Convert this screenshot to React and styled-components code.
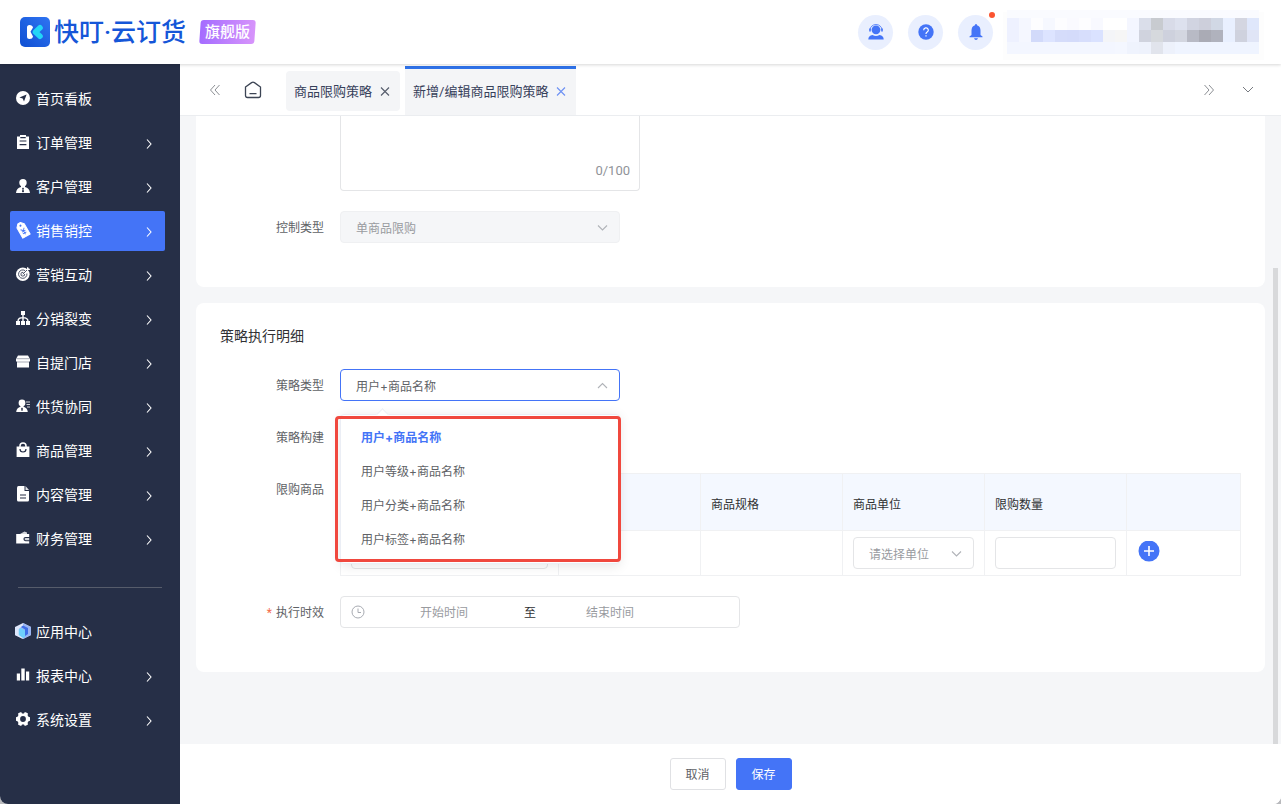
import React, { useState } from "react";
import styled, { createGlobalStyle, css } from "styled-components";

const GlobalStyle = createGlobalStyle`
	* {
		box-sizing: border-box;
	}
	body {
		margin: 0;
		background: #b9babd;
		font-family: Roboto, "Noto Sans CJK SC", sans-serif;
		font-size: 12px;
		color: #606266;
	}
	button, input, select, textarea {
		font-family: inherit;
		font-size: inherit;
		color: inherit;
		margin: 0;
	}
	svg {
		display: block;
	}
`;

const StyledPage = styled.div`
	display: flex;
	flex-direction: column;
	height: 100vh;
	overflow: hidden;
	border-radius: 0 0 8px 8px;
	background: white;
`;

// header

const StyledHeader = styled.header`
	position: relative;
	z-index: 2;
	display: flex;
	align-items: center;
	flex: none;
	height: 64px;
	padding: 0 17px 0 20px;
	background: white;
	box-shadow: 0 1px 3px rgba(0, 0, 0, 0.16);
`;

const StyledBrand = styled.span`
	margin-left: 4px;
	padding-top: 2px;
	font-size: 25px;
	line-height: 32px;
	font-weight: 500;
	white-space: nowrap;
	color: #1556d8;
`;

const StyledEdition = styled.span`
	position: relative;
	z-index: 0;
	margin-left: 14px;
	padding: 0 5px;
	font-size: 15px;
	line-height: 24px;
	font-weight: 500;
	white-space: nowrap;
	color: white;

	&::before {
		content: "";
		position: absolute;
		z-index: -1;
		inset: 0;
		border-radius: 3px;
		transform: skewX(-4deg);
		background: linear-gradient(90deg, #a46cff, #d794fb);
	}
`;

const StyledTools = styled.div`
	display: flex;
	align-items: center;
	gap: 15px;
	margin-left: auto;
`;

const StyledTool = styled.button`
	position: relative;
	display: flex;
	align-items: center;
	justify-content: center;
	width: 35px;
	height: 35px;
	padding: 0;
	border: none;
	border-radius: 50%;
	background: #e9effe;
	color: #4474f7;
	cursor: pointer;
`;

const StyledDot = styled.span`
	position: absolute;
	top: -3px;
	right: -2px;
	width: 6px;
	height: 6px;
	border-radius: 50%;
	background: #fb5430;
`;

const StyledAccount = styled.div`
	margin-left: 10px;
	padding-top: 6px;
`;

const StyledBody = styled.div`
	display: flex;
	flex: 1;
	min-height: 0;
`;

// side menu

const StyledMenu = styled.nav`
	display: flex;
	flex-direction: column;
	flex: none;
	gap: 4px;
	width: 180px;
	padding: 15px 15px 0 10px;
	background: #262f47;
`;

const StyledMenuItem = styled.a`
	display: flex;
	align-items: center;
	gap: 6px;
	height: 40px;
	padding: 0 12px 2px 6px;
	border-radius: 2px;
	font-size: 14px;
	color: white;
	text-decoration: none;
	background: ${(props) => (props.$active ? "#4474f7" : "transparent")};
`;

const StyledMenuText = styled.span`
	flex: 1;
`;

const StyledDivider = styled.hr`
	width: 144px;
	height: 1px;
	margin: 24px 0 20px 8px;
	border: none;
	background: #565c6b;
`;

// tabs

const StyledMain = styled.main`
	position: relative;
	display: flex;
	flex-direction: column;
	flex: 1;
	min-width: 0;
	background: #f5f6f8;
`;

const StyledTabBar = styled.div`
	display: flex;
	align-items: center;
	flex: none;
	height: 52px;
	padding: 0 26px 0 28px;
	border-bottom: 1px solid #ebedf0;
	background: white;
`;

const StyledIconBtn = styled.button`
	display: flex;
	align-items: center;
	justify-content: center;
	flex: none;
	padding: 0;
	border: none;
	background: none;
	color: ${(props) => props.$color || "#8c8f94"};
	cursor: pointer;
`;

const StyledHome = styled(StyledIconBtn)`
	margin: 0 24px 0 22px;
`;

const StyledTabs = styled.div`
	display: flex;
	align-items: center;
	align-self: stretch;
	flex: 1;
	gap: 5px;
`;

const StyledTab = styled.div`
	display: flex;
	align-items: center;
	gap: 8px;
	height: 40px;
	margin-top: 2px;
	padding: 0 10px 0 8px;
	border-radius: 4px;
	font-size: 13px;
	white-space: nowrap;
	color: #36405a;
	background: #f4f5f7;

	${(props) =>
		props.$active &&
		css`
			align-self: flex-end;
			height: 49px;
			padding-bottom: 3px;
			border-top: 3px solid #2f72e8;
			border-radius: 0;
		`}
`;

const StyledRightBtns = styled.div`
	display: flex;
	gap: 25px;
`;

// cards and form

const StyledContent = styled.div`
	flex: 1;
	min-height: 0;
	overflow: hidden;
	padding: 0 16px;
`;

const StyledThumb = styled.span`
	position: absolute;
	right: 3px;
	top: 204px;
	bottom: 60px;
	width: 5px;
	background: #d8d9db;
`;

const StyledCard = styled.section`
	margin-bottom: 16px;
	padding: ${(props) => (props.$cut ? "0 24px 24px" : "24px")};
	border-radius: ${(props) => (props.$cut ? "0 0 8px 8px" : "8px")};
	background: white;
`;

const StyledCardTitle = styled.h2`
	margin: 0 0 24px;
	font-size: 14px;
	line-height: 18px;
	font-weight: 400;
	color: #303133;
`;

const StyledRow = styled.div`
	display: flex;
	align-items: flex-start;
	min-height: 32px;
	margin-bottom: 20px;
`;

const StyledLabel = styled.label`
	flex: none;
	width: 120px;
	height: 32px;
	padding: 1px 16px 0 0;
	line-height: 32px;
	text-align: right;

	${(props) =>
		props.$required &&
		css`
			&::before {
				content: "*";
				margin-right: 4px;
				color: #f56c4c;
			}
		`}
`;

const StyledTextWrap = styled.div`
	position: relative;
	width: 300px;
`;

const StyledTextarea = styled.textarea`
	display: block;
	width: 100%;
	height: 75px;
	padding: 5px 15px;
	border: 1px solid #e4e5e7;
	border-top: none;
	border-radius: 0 0 4px 4px;
	outline: none;
	resize: none;
`;

const StyledCount = styled.span`
	position: absolute;
	right: 10px;
	bottom: 10px;
	font-size: 13px;
	line-height: 20px;
	color: #909399;
`;

const StyledSelectWrap = styled.div`
	position: relative;
	width: ${(props) => (props.$full ? "100%" : "280px")};

	> svg {
		position: absolute;
		right: 12px;
		top: 12px;
		color: #b0b3b8;
		pointer-events: none;
	}
`;

const StyledSelect = styled.select`
	display: block;
	width: 100%;
	height: 32px;
	padding: 2px 30px 0 15px;
	border: 1px solid ${(props) => (props.$open ? "#4474f7" : "#e4e5e7")};
	border-radius: 4px;
	appearance: none;
	outline: none;
	font-family: Inter, "Noto Sans CJK SC", sans-serif;
	background: white;
	color: ${(props) => (props.$empty ? "#999b9f" : "#606266")};

	&:disabled {
		border-color: #eff0f2;
		background: #f5f6f8;
		color: #999b9f;
		opacity: 1;
	}
`;

const StyledPopup = styled.ul`
	position: absolute;
	z-index: 1;
	left: 0;
	top: 45px;
	width: 100%;
	margin: 0;
	padding: 6px 0;
	list-style: none;
	border: 1px solid #ebeef5;
	border-radius: 4px;
	font-family: Inter, "Noto Sans CJK SC", sans-serif;
	background: white;
	box-shadow: 0 2px 12px rgba(0, 0, 0, 0.1);

	&::before {
		content: "";
		position: absolute;
		left: 37px;
		top: -5px;
		width: 8px;
		height: 8px;
		transform: rotate(45deg);
		border-top: 1px solid #ebeef5;
		border-left: 1px solid #ebeef5;
		background: white;
	}
`;

const StyledOption = styled.li`
	padding: 0 20px;
	line-height: 34px;
	cursor: pointer;
	color: ${(props) => (props.$chosen ? "#4474f7" : "#606266")};
	font-weight: ${(props) => (props.$chosen ? 700 : 400)};
`;

const StyledFrame = styled.span`
	position: absolute;
	z-index: 2;
	left: -5px;
	right: -1px;
	top: 47px;
	height: 146px;
	border: 3px solid #f0483e;
	border-radius: 4px;
	pointer-events: none;
`;

const StyledTable = styled.table`
	flex: 1;
	min-width: 0;
	table-layout: fixed;
	border-collapse: collapse;

	th, td {
		padding: 0 10px;
		border: 1px solid #f0f1f3;
		text-align: left;
	}
	th {
		height: 57px;
		padding-top: 3px;
		font-weight: 400;
		color: #303133;
		background: #f4f8ff;
	}
	td {
		height: 45px;
	}
`;

const StyledInput = styled.input`
	display: block;
	width: 100%;
	height: 32px;
	padding: 0 15px;
	border: 1px solid #e4e5e7;
	border-radius: 4px;
	outline: none;
`;

const StyledRange = styled.div`
	display: flex;
	align-items: center;
	width: 400px;
	height: 32px;
	padding: 0 10px;
	border: 1px solid #e4e5e7;
	border-radius: 4px;
	color: #303133;

	> svg {
		flex: none;
		margin-right: 5px;
		color: #a8abb2;
	}
`;

const StyledRangeInput = styled.input`
	width: 148px;
	padding: 2px 0 0;
	border: none;
	outline: none;
	text-align: center;
	background: none;

	&::placeholder {
		color: #999b9f;
	}
`;

const StyledRangeSep = styled.span`
	width: 18px;
	padding-bottom: 1px;
	text-align: right;
`;

const StyledFooter = styled.footer`
	display: flex;
	align-items: center;
	justify-content: center;
	flex: none;
	gap: 10px;
	height: 60px;
	background: white;
`;

const StyledBtn = styled.button`
	width: 56px;
	height: 32px;
	padding: 0 0 2px;
	border: 1px solid ${(props) => (props.$primary ? "#4474f7" : "#e0e1e4")};
	border-radius: 3px;
	background: ${(props) => (props.$primary ? "#4474f7" : "white")};
	color: ${(props) => (props.$primary ? "white" : "#606266")};
	cursor: pointer;
`;

// icons

const Icon = ({ size = 14, box = 14, children }) => (
	<svg width={size} height={size} viewBox={`0 0 ${box} ${box}`} fill="currentColor" overflow="visible" aria-hidden="true">
		{children}
	</svg>
);

const Line = ({ w, h, d, width = 1 }) => (
	<svg width={w} height={h} viewBox={`0 0 ${w} ${h}`} fill="none" stroke="currentColor" strokeWidth={width} aria-hidden="true">
		<path d={d} />
	</svg>
);

const ArrowRight = () => <Line w={8} h={14} d="M2 4.5 L6 9 L2 13.5" width={1.1} />;
const ArrowDown = () => <Line w={11} h={9} d="M1 2.5 L5.5 7 L10 2.5" width={1.1} />;
const ArrowUp = () => <Line w={11} h={9} d="M1 7 L5.5 2.5 L10 7" width={1.1} />;
const Cross = () => <Line w={10} h={10} d="M1 1.5 L9 9.5 M9 1.5 L1 9.5" width={1.1} />;

const HOLE = "#262f47";

const icons = {
	compass: (
		<>
			<circle cx="7" cy="7" r="7" />
			<path d="M10.6 3.4 L8 10.6 L6.7 7.4 L3.4 6.4 Z" fill={HOLE} />
		</>
	),
	clipboard: (
		<>
			<path d="M1 1.5h3V0h6v1.5h3V14H1z" />
			<path d="M4.3 2.6h5.4M3.6 6h6.8M3.6 9.6h6.8" stroke={HOLE} strokeWidth="1.2" />
		</>
	),
	customer: (
		<>
			<circle cx="7" cy="3.7" r="3.7" />
			<path d="M5 6.5h4v1.4c3 .8 4.7 2.6 5 6.1H0c.3-3.5 2-5.3 5-6.1z" />
			<path d="M7 8.5l1 1-.6 1 .7 2-1.1 1-1.1-1 .7-2-.6-1z" fill={HOLE} />
		</>
	),
	tag: (
		<g transform="rotate(-30 7 7)">
			<path d="M2.8 2.2 L5.5 -.8 H8.5 L11.2 2.2 V14 H2.8 Z" stroke="currentColor" strokeLinejoin="round" />
			<circle cx="7" cy="2" r="1" fill="#4474f7" />
			<path d="M5 5.6l2 2.3 2-2.3M7 7.900v4M5 8.300h4M5 10.200h4" stroke="#4474f7" strokeWidth=".9" fill="none" />
		</g>
	),
	target: (
		<>
			<circle cx="6.8" cy="7.2" r="6.8" />
			<path d="M9 3.600A4.200 4.200 0 1 0 10.900 6.500" stroke={HOLE} strokeWidth=".8" fill="none" />
			<path d="M7.400 5.400A1.900 1.900 0 1 0 8.700 7" stroke={HOLE} strokeWidth=".8" fill="none" />
			<path d="M6.800 7.200L12.300 1.700" stroke={HOLE} strokeWidth=".8" />
			<path d="M11 .6V3h2.600l.6-1-1.500-.6L12 0z" />
		</>
	),
	sitemap: (
		<>
			<path d="M5 0h4v4H5zM0 10h4v4H0zM5 10h4v4H5zM10 10h4v4h-4z" />
			<path d="M7 4v7M2 10.500C2 7.500 4 6.600 7 6.600s5 .9 5 3.900" stroke="currentColor" strokeWidth="1.4" fill="none" />
		</>
	),
	store: (
		<>
			<path d="M2 .5h10L14 4v2.500H0V4z" />
			<path d="M1 7.500h12v5H1z" />
			<path d="M.5 3.700h13" stroke={HOLE} strokeWidth=".4" />
			<path d="M1 6h12v2H1z" opacity=".6" />
		</>
	),
	supplier: (
		<>
			<circle cx="6" cy="4" r="3.4" />
			<path d="M4.5 6.500h3v1.300c2.500.7 4 2.200 4.300 5.200H.2c.3-3 1.800-4.500 4.300-5.200z" />
			<path d="M6 8.500l.9 1-.5 2.500h-.8l-.5-2.500z" fill={HOLE} />
			<path d="M10 3h4M10.500 5.500H14M11 8h3" stroke="currentColor" strokeWidth="1.2" opacity=".8" />
		</>
	),
	bag: (
		<>
			<path d="M.6 3.500h12.800V14H.6z" />
			<path d="M4 4.500V3a3 3 0 0 1 6 0v1.500" stroke="currentColor" strokeWidth="1.5" fill="none" />
			<path d="M4 6a3 3 0 0 0 6 0" stroke={HOLE} strokeWidth="1.2" fill="none" />
		</>
	),
	file: (
		<>
			<path d="M1 1Q1-1 2.500-1H8.500V4H13V13Q13 14.500 11.500 14.500H2.500Q1 14.500 1 13z" />
			<path d="M9.500-1L13 3.100H9.500z" opacity=".85" />
			<path d="M4 8h6M4 11h6" stroke={HOLE} strokeWidth="1.2" />
		</>
	),
	wallet: (
		<>
			<path d="M4 3L8.500.5 11 1.500V3z" opacity=".8" />
			<path d="M.2 3h13v3H9.500a1.500 1.500 0 0 0 0 4.200h3.700v2.300H.2z" />
			<path d="M9.700 7h3.500v2.200H9.700a1.100 1.100 0 0 1 0-2.200z" opacity=".8" />
		</>
	),
	bars: <path d="M.8 5.500H4V12.500H.8zM5.300.5H8.700V12.500H5.300zM10 3.500H13.200v9H10z" />,
	gear: (
		<path
			fillRule="evenodd"
			d="M4.300.2H5.400L6 1.500H8L8.600.2H9.700L12 1.500 11.600 3.200 12.500 4.700 14 5.200V8.800L12.500 9.300 11.600 10.800 12 12.500 9.700 13.800H8.600L8 12.500H6L5.400 13.800H4.300L2 12.500 2.400 10.800 1.500 9.300 0 8.800V5.200L1.500 4.700 2.400 3.200 2 1.500zM7 4.100a2.900 2.900 0 1 0 0 5.800 2.900 2.900 0 0 0 0-5.800z"
		/>
	),
	cube: (
		<>
			<path d="M7-1L15 3V11L7 15L-1 11V3Z" fill="#dfe8fb" />
			<path d="M7-1L15 3V11L7 15V7L3 4.500L7 2Z" fill="#9ab5f1" />
			<path d="M7 1.500L12 4V10L9 12V5.500L5 3Z" fill="#3f6ee8" />
			<path d="M5 4L9 6.500V13L7 14L2.500 11V5.500Z" fill="#6fd0fb" />
			<path d="M-1 3L2.500 5.500V11L7 15L-1 11Z" fill="#dce6fb" />
		</>
	),
};

const menu = [
	{ text: "首页看板", icon: "compass", leaf: true },
	{ text: "订单管理", icon: "clipboard" },
	{ text: "客户管理", icon: "customer" },
	{ text: "销售销控", icon: "tag", active: true },
	{ text: "营销互动", icon: "target" },
	{ text: "分销裂变", icon: "sitemap" },
	{ text: "自提门店", icon: "store" },
	{ text: "供货协同", icon: "supplier" },
	{ text: "商品管理", icon: "bag" },
	{ text: "内容管理", icon: "file" },
	{ text: "财务管理", icon: "wallet" },
];

const bottomMenu = [
	{ text: "应用中心", icon: "cube", leaf: true },
	{ text: "报表中心", icon: "bars" },
	{ text: "系统设置", icon: "gear" },
];

const strategies = ["用户+商品名称", "用户等级+商品名称", "用户分类+商品名称", "用户标签+商品名称"];

// blurred account block, one colour per tile
const mosaic = [
	["#eef1ff", "#f5f7ff", "#fdfdff", "#f6f8ff", "#fdfdff", "#fafaff", "#fdfdff", "#f8f9ff", "#ffffff", "#ffffff", "#f4f6ff", "#dadeea", "#c8cbd0", "#d8dbe8", "#dde1ee", "#d1d4e1", "#cdcfdb", "#d1d8e5", "#e9f0ff", "#d4d6e1", "#dfe7fb"],
	["#eef1ff", "#f5f7ff", "#d2dafa", "#dde4ff", "#d5dcfa", "#d4dbfa", "#d7defc", "#dae2ff", "#f4f5f8", "#f6f6f6", "#f2f5ff", "#d0d3de", "#d6d9dd", "#ced1dd", "#d3d6e0", "#b8bac5", "#aaabb5", "#b0b2bd", "#e9f0ff", "#cfd2de", "#e0e5f6"],
	["#f3f6ff", "#f3f6ff", "#f3f6ff", "#f3f6ff", "#f3f6ff", "#f3f6ff", "#f3f6ff", "#f3f6ff", "#f3f6ff", "#f4f7ff", "#eff3fd", "#eef2fc", "#e1e4ec", "#edf1fb", "#eff4ff", "#eff4ff", "#eff4ff", "#eff4ff", "#eff4ff", "#eff4ff", "#eff4ff"],
];

function Logo() {
	return (
		<svg width="30" height="30" viewBox="0 0 30 30" aria-hidden="true">
			<defs>
				<linearGradient id="logoBg" x1="1" y1="0" x2="0" y2="1">
					<stop offset="0" stopColor="#2f74f2" />
					<stop offset="1" stopColor="#0f4fd2" />
				</linearGradient>
			</defs>
			<rect width="30" height="30" rx="5" fill="url(#logoBg)" />
			<path d="M7 10.500Q7 8 9.500 8Q12.500 8 13 10.500L10.500 14.800L13 19.500Q12.500 22 9.500 22Q7 22 7 19.500Z" fill="white" />
			<path d="M20 10.800L15.500 15L20 19.200" fill="none" stroke="#22d5f7" strokeWidth="5.600" strokeLinecap="round" strokeLinejoin="round" />
		</svg>
	);
}

function MenuItem({ item }) {
	return (
		<StyledMenuItem href="#" $active={item.active}>
			<Icon>{icons[item.icon]}</Icon>
			<StyledMenuText>{item.text}</StyledMenuText>
			{item.leaf ? null : <ArrowRight />}
		</StyledMenuItem>
	);
}

function Header() {
	return (
		<StyledHeader>
			<Logo />
			<StyledBrand>快叮·云订货</StyledBrand>
			<StyledEdition>旗舰版</StyledEdition>
			<StyledTools>
				<StyledTool>
					<Icon size={16} box={16}>
						<circle cx="8" cy="5.800" r="4.400" />
						<path d="M2 6A6 5.500 0 0 1 14 6" fill="none" stroke="currentColor" opacity=".8" />
						<path d="M1 4.500h2v3H1zM13 4.500h2v3h-2z" opacity=".8" />
						<path d="M.3 15.500Q.3 11.500 4.500 11Q8 13 11.500 11Q15.700 11.500 15.700 15.500Z" />
					</Icon>
				</StyledTool>
				<StyledTool>
					<Icon size={16} box={16}>
						<circle cx="8" cy="8" r="7.700" />
						<path d="M5.700 6.200A2.300 2.300 0 1 1 9.200 8.100Q8 8.800 8 10M8 11.300V12.600" fill="none" stroke="white" strokeWidth="1.2" />
					</Icon>
				</StyledTool>
				<StyledTool>
					<Icon size={16} box={16}>
						<path d="M7 1.200Q7 0 8 0T9 1.200Q12.500 2.300 12.500 6.500V11L14.500 12.500V13.300H1.500V12.500L3.500 11V6.500Q3.500 2.300 7 1.200ZM6 14.200H10Q9.500 16 8 16T6 14.200Z" />
					</Icon>
					<StyledDot />
				</StyledTool>
			</StyledTools>
			<StyledAccount>
				<svg width="261" height="50" viewBox="0 0 261 50" shapeRendering="crispEdges" aria-hidden="true">
					<rect y="2" width="261" height="48" fill="#fdfdfd" />
					<rect x="4" width="252" height="8" fill="#fafbff" />
					{mosaic.map((row, y) =>
						row.map((fill, x) => (
							<rect key={`${x}-${y}`} x={4 + x * 12} y={8 + y * 12} width="12" height="12" fill={fill} />
						))
					)}
				</svg>
			</StyledAccount>
		</StyledHeader>
	);
}

function TabBar() {
	return (
		<StyledTabBar>
			<StyledIconBtn aria-label="«">
				<Line w={14} h={14} d="M7 2L2.500 7L7 12M11.500 2L7 7L11.500 12" />
			</StyledIconBtn>
			<StyledHome $color="#3c4454" aria-label="首页">
				<Line
					w={18}
					h={18}
					width={1.3}
					d="M1.500 6L7.600 1.600Q9 .7 10.400 1.600L16.500 6V14.500Q16.500 16.500 14.500 16.500H3.500Q1.500 16.500 1.500 14.500ZM5.500 12.700H12.500"
				/>
			</StyledHome>
			<StyledTabs>
				<StyledTab>
					商品限购策略
					<StyledIconBtn $color="#555c6b" aria-label="×">
						<Cross />
					</StyledIconBtn>
				</StyledTab>
				<StyledTab $active>
					新增/编辑商品限购策略
					<StyledIconBtn $color="#6c90f3" aria-label="×">
						<Cross />
					</StyledIconBtn>
				</StyledTab>
			</StyledTabs>
			<StyledRightBtns>
				<StyledIconBtn aria-label="»">
					<Line w={14} h={14} d="M2.500 2L7 7L2.500 12M7 2L11.500 7L7 12" />
				</StyledIconBtn>
				<StyledIconBtn $color="#777a80" aria-label="⌄">
					<Line w={14} h={14} d="M2 4L7 9L12 4" />
				</StyledIconBtn>
			</StyledRightBtns>
		</StyledTabBar>
	);
}

function StrategySelect() {
	const [value, setValue] = useState(strategies[0]);
	return (
		<StyledSelectWrap>
			<StyledSelect id="strategy" $open value={value} onChange={(e) => setValue(e.target.value)}>
				{strategies.map((s) => (
					<option key={s}>{s}</option>
				))}
			</StyledSelect>
			<ArrowUp />
			<StyledPopup role="listbox">
				{strategies.map((s) => (
					<StyledOption key={s} role="option" aria-selected={s === value} $chosen={s === value} onClick={() => setValue(s)}>
						{s}
					</StyledOption>
				))}
			</StyledPopup>
			<StyledFrame />
		</StyledSelectWrap>
	);
}

function GoodsTable() {
	return (
		<StyledTable>
			<colgroup>
				<col width="218" />
				<col width="142" />
				<col width="142" />
				<col width="142" />
				<col width="142" />
				<col width="114" />
			</colgroup>
			<thead>
				<tr>
					<th />
					<th />
					<th>商品规格</th>
					<th>商品单位</th>
					<th>限购数量</th>
					<th />
				</tr>
			</thead>
			<tbody>
				<tr>
					<td>
						<StyledInput aria-label="限购商品" />
					</td>
					<td />
					<td />
					<td>
						<StyledSelectWrap $full>
							<StyledSelect $empty aria-label="商品单位">
								<option>请选择单位</option>
							</StyledSelect>
							<ArrowDown />
						</StyledSelectWrap>
					</td>
					<td>
						<StyledInput aria-label="限购数量" />
					</td>
					<td>
						<StyledIconBtn $color="#4474f7" aria-label="+">
							<svg width="24" height="24" viewBox="0 0 24 24" aria-hidden="true">
								<circle cx="12" cy="10" r="10.500" fill="currentColor" />
								<path d="M7 10H17M12 5V15" stroke="white" strokeWidth="1.6" />
							</svg>
						</StyledIconBtn>
					</td>
				</tr>
			</tbody>
		</StyledTable>
	);
}

export default function App() {
	return (
		<StyledPage>
			<GlobalStyle />
			<Header />
			<StyledBody>
				<StyledMenu>
					{menu.map((item) => (
						<MenuItem key={item.text} item={item} />
					))}
					<StyledDivider />
					{bottomMenu.map((item) => (
						<MenuItem key={item.text} item={item} />
					))}
				</StyledMenu>
				<StyledMain>
					<TabBar />
					<StyledContent>
						<StyledCard $cut>
							<StyledRow>
								<StyledLabel as="span" />
								<StyledTextWrap>
									<StyledTextarea maxLength={100} />
									<StyledCount>0/100</StyledCount>
								</StyledTextWrap>
							</StyledRow>
							<StyledRow>
								<StyledLabel htmlFor="control">控制类型</StyledLabel>
								<StyledSelectWrap>
									<StyledSelect id="control" disabled>
										<option>单商品限购</option>
									</StyledSelect>
									<ArrowDown />
								</StyledSelectWrap>
							</StyledRow>
						</StyledCard>
						<StyledCard>
							<StyledCardTitle>策略执行明细</StyledCardTitle>
							<StyledRow>
								<StyledLabel htmlFor="strategy">策略类型</StyledLabel>
								<StrategySelect />
							</StyledRow>
							<StyledRow>
								<StyledLabel as="span">策略构建</StyledLabel>
							</StyledRow>
							<StyledRow>
								<StyledLabel as="span">限购商品</StyledLabel>
								<GoodsTable />
							</StyledRow>
							<StyledRow>
								<StyledLabel htmlFor="start" $required>
									执行时效
								</StyledLabel>
								<StyledRange>
									<Icon>
										<circle cx="7" cy="7" r="6" fill="none" stroke="currentColor" />
										<path d="M7 3.500V7.500H10" fill="none" stroke="currentColor" />
									</Icon>
									<StyledRangeInput id="start" placeholder="开始时间" />
									<StyledRangeSep>至</StyledRangeSep>
									<StyledRangeInput placeholder="结束时间" aria-label="结束时间" />
								</StyledRange>
							</StyledRow>
						</StyledCard>
					</StyledContent>
					<StyledThumb />
					<StyledFooter>
						<StyledBtn>取消</StyledBtn>
						<StyledBtn $primary>保存</StyledBtn>
					</StyledFooter>
				</StyledMain>
			</StyledBody>
		</StyledPage>
	);
}
